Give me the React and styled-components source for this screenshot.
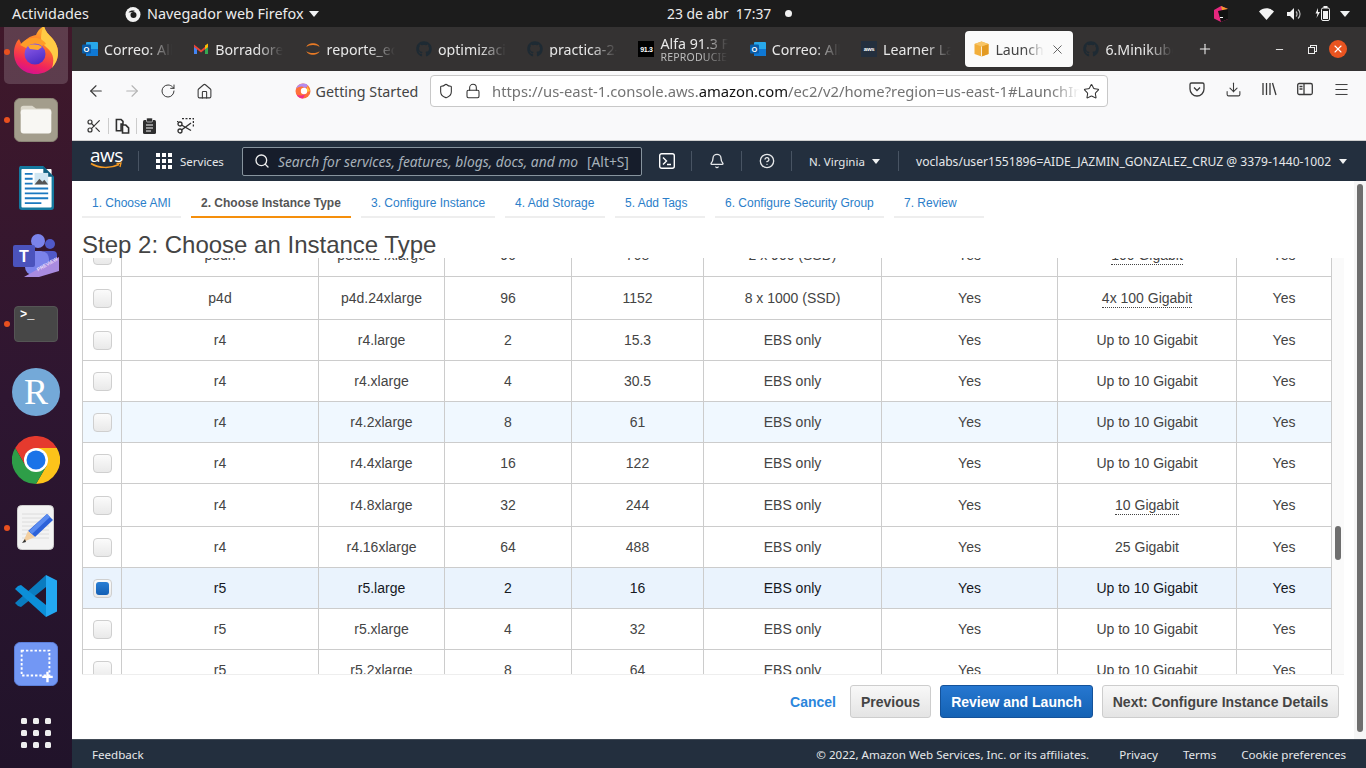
import React from 'react';
import styled, { createGlobalStyle } from 'styled-components';
import { ArrowLeft, ArrowRight, RotateCw, House, Shield, Lock, Star, Download, Menu, Scissors, Search, Bell, CircleHelp, X, Plus, Minus } from 'lucide-react';
import { FaGithub } from 'react-icons/fa';

const Global = createGlobalStyle`
  html, body { margin: 0; padding: 0; width: 1366px; height: 768px; overflow: hidden; background: #fff; }
  * { box-sizing: border-box; }
`;
const UI = `"Noto Sans", "Open Sans", sans-serif`;
const AWS = `"Liberation Sans", Arial, sans-serif`;

const Screen = styled.div`width: 1366px; height: 768px; display: flex; flex-direction: column; overflow: hidden; font-family: ${UI};`;
const TopBar = styled.header`height: 27px; flex: none; background: #1c1c1c; color: #ececec; font-size: 14.4px; display: flex; align-items: center; position: relative; z-index: 3;`;
const Activities = styled.span`margin-left: 12px; width: 113px;`;
const AppMenu = styled.div`display: flex; align-items: center; gap: 6px; width: 542px; svg { flex: none; }`;
const Clock = styled.div`display: flex; align-items: center; font-size: 13.9px; width: 130px; span:first-child { width: 117.5px; white-space: nowrap; }`;
const StatusDot = styled.i`display: block; width: 7px; height: 7px; border-radius: 50%; background: #f2f2f2;`;
const Tray = styled.div`margin-left: auto; display: flex; align-items: center; margin-right: 16px; gap: 13px;`;
const TraySpacer = styled.span`width: 4px;`;
const Workspace = styled.div`flex: 1; display: flex; min-height: 0;`;

const Dock = styled.nav`width: 72px; flex: none; background: linear-gradient(180deg, #40182a 0%, #2e1631 50%, #21132a 100%); overflow: hidden; display: flex; flex-direction: column; align-items: center;`;
const DockItem = styled.div`width: 72px; height: 68px; flex: none; position: relative; display: flex; align-items: center; justify-content: center; &:first-child { margin-top: -9px; }`;
const ActiveTile = styled.div`position: absolute; left: 4px; top: 2px; width: 64px; height: 64px; border-radius: 5px; background: rgba(255,255,255,.16);`;
const RunDot = styled.i`position: absolute; left: 4px; top: 31px; width: 6px; height: 6px; border-radius: 50%; background: #e9501f;`;
const DockIcon = styled.div`position: relative; width: 48px; height: 48px; display: flex; align-items: center; justify-content: center;`;
const RBall = styled.div`width: 48px; height: 48px; border-radius: 50%; background: #74a9d8; color: #fff; font: 400 36px "Liberation Serif", serif; display: flex; align-items: center; justify-content: center;`;
const TermTile = styled.div`width: 44px; height: 36px; border-radius: 4px; background: #474747; border: 1px solid #555; color: #fff; font: 700 12px "Liberation Mono", monospace; padding: 1px 0 0 5px; line-height: 14px;`;
const AppsGrid = styled.div`display: grid; grid-template-columns: repeat(3, 6px); gap: 6px; margin-top: 1px; i { width: 6px; height: 6px; border-radius: 1.5px; background: #eeeeee; display: block; }`;

const Browser = styled.main`flex: 1; min-width: 0; display: flex; flex-direction: column;`;
const TabBar = styled.div`height: 44px; flex: none; background: #343232; display: flex; align-items: center; color: #e8e8e8; font-size: 14.2px;`;
const Tab = styled.div`width: 111.3px; flex: none; height: 36px; padding-left: ${p => p.$active ? 9 : 10}px; display: flex; align-items: center; gap: 6px; position: relative; overflow: hidden; svg { flex: none; }
  ${p => p.$active ? `background: #fafafa; color: #444; border-radius: 4px; margin-left: 3px; width: 108px; box-shadow: 0 0 1px rgba(0,0,0,.4);` : ''}`;
const TabLabel = styled.div`width: ${p => p.$w || 68}px; white-space: nowrap; overflow: hidden; -webkit-mask-image: linear-gradient(90deg, #000 62%, transparent 100%); mask-image: linear-gradient(90deg, #000 62%, transparent 100%); line-height: 15px;`;
const TabSub = styled.div`font-size: 10.5px; color: #bdbdbd; line-height: 12px; letter-spacing: .2px;`;
const TabClose = styled.span`margin-left: auto; margin-right: 8px; display: flex; color: #444;`;
const NewTab = styled.span`margin-left: 12px; display: flex; color: #f0f0f0; width: 60px;`;
const WinControls = styled.div`margin-left: auto; display: flex; align-items: center; margin-right: 19px; color: #eee;`;
const MinimizeBtn = styled.span`display: flex; margin-right: 23px;`;
const RestoreBox = styled.i`display: block; width: 7px; height: 7px; margin: 2px 14px 0 0; border: 1px solid #eee; box-shadow: 2px -2px 0 -1px #343232, 2px -2px 0 0 #eee;`;
const CloseCircle = styled.span`width: 18px; height: 18px; border-radius: 50%; background: #e95420; display: flex; align-items: center; justify-content: center; color: #fff;`;
const Fav = styled.div`width: 16px; height: 16px; flex: none; background: #000; color: #fff; font: 700 7px ${AWS}; display: flex; align-items: center; justify-content: center; letter-spacing: -.3px;`;
const AwsFav = styled(Fav)`background: #232f3e; font-size: 6px;`;

const NavBar = styled.div`height: 36px; flex: none; background: #f9f9fa; display: flex; align-items: flex-start; color: #3a3a3a;`;
const NavBtn = styled.span`width: ${p => p.$w || 36}px; height: 32px; margin-top: 4px; display: flex; align-items: center; justify-content: center; color: ${p => p.$dim ? '#b4b4b4' : '#3a3a3a'}; flex: none;`;
const NavLeft = styled.div`display: flex; padding-left: 6px; width: 223px; flex: none;`;
const Bookmark = styled.div`display: flex; align-items: center; gap: 4.5px; width: 135px; margin-top: 4px; height: 32px; flex: none; font-size: 14.3px; color: #444; white-space: nowrap;`;
const UrlBox = styled.div`width: 678px; height: 32px; margin-top: 4px; flex: none; background: #fff; border: 1px solid #c8c8c8; border-radius: 4px; display: flex; align-items: center; padding-left: 7px; color: #333;`;
const UrlText = styled.div`width: 588px; margin-left: 11px; flex: none; white-space: nowrap; overflow: hidden; font-size: 14.8px; color: #737373; -webkit-mask-image: linear-gradient(90deg, #000 95%, transparent 100%); mask-image: linear-gradient(90deg, #000 95%, transparent 100%); b { font-weight: 400; color: #111; }`;
const UrlIcon = styled.span`display: flex; margin-left: ${p => p.$ml || 0}px;`;
const NavRight = styled.div`margin-left: 81px; display: flex; gap: 19.7px; align-items: center; height: 36px; color: #3a3a3a; svg { display: block; }`;

const ToolStrip = styled.div`height: 34px; flex: none; background: #f9f9fa; border-bottom: 1px solid #cfcfcf; display: flex; align-items: center; padding: 4px 0 0 14px; color: #333;`;
const StripSep = styled.i`display: block; width: 1px; height: 16px; background: #ccc; margin: 0 6px;`;
const StripGap = styled.span`width: 21px;`;

const AwsNav = styled.div`height: 40px; flex: none; background: #232f3e; display: flex; align-items: center; padding-left: 18px; color: #e6e8ea; font-size: 11.5px; white-space: nowrap;`;
const AwsLogo = styled.div`width: 32px; flex: none; position: relative; color: #fff; font: 500 19px/16px "Open Sans", sans-serif; letter-spacing: -.5px; height: 26px; margin-top: -3px; svg { display: block; margin-top: -1px; }`;
const NavDiv = styled.i`display: block; width: 1px; height: 20px; background: #485463; flex: none; margin: 0 ${p => p.$r ?? 17}px 0 ${p => p.$l ?? 16}px;`;
const ServicesGrid = styled.div`display: grid; grid-template-columns: repeat(3, 4px); gap: 2px; flex: none; i { width: 4px; height: 4px; background: #fff; display: block; }`;
const ServicesLabel = styled.span`margin-left: 8px; width: 45px; flex: none;`;
const SearchBox = styled.div`width: 400px; height: 29px; flex: none; margin: 0 17px; background: #161d2b; border: 1px solid #87949e; border-radius: 2px; display: flex; align-items: center; padding-left: 11px; color: #a7b1ba; font-size: 13.8px; svg { color: #eee; flex: none; }`;
const SearchPlaceholder = styled.span`font-style: italic; width: 300px; margin-left: 8px; flex: none;`;
const SearchKey = styled.span`margin-left: 9px; flex: none;`;
const Caret = styled.i`display: block; width: 0; height: 0; flex: none; border-left: ${p => p.$s || 4}px solid transparent; border-right: ${p => p.$s || 4}px solid transparent; border-top: ${p => (p.$s || 4) + 1}px solid ${p => p.$c || '#f0f2f3'}; margin-left: ${p => p.$ml ?? 6}px;`;
const Region = styled.span`width: 57px; flex: none;`;
const Account = styled.span`width: 417px; flex: none; font-size: 12.1px;`;

const Content = styled.section`flex: 1; min-height: 0; display: flex; background: #fff;`;
const Page = styled.div`width: 1282px; flex: none; padding-left: 10px; display: flex; flex-direction: column; font-family: ${AWS};`;
const Wizard = styled.div`display: flex; gap: 10px; margin-top: 8px; height: 29px; flex: none;`;
const Step = styled.div`height: 29px; width: ${p => p.$w}px; padding: 7px 0 0 10px; font-size: 12px; line-height: 14px; white-space: nowrap; border-bottom: 2px solid ${p => p.$active ? '#f58f0c' : '#eeeeee'}; color: ${p => p.$active ? '#555' : '#2b7ec9'}; font-weight: ${p => p.$active ? 700 : 400};`;
const Title = styled.h1`margin: 0; height: 40px; padding-top: 13px; font: 400 24px/28px ${AWS}; color: #444; flex: none; position: relative; z-index: 1;`;
const TableArea = styled.div`height: 417px; flex: none; display: flex; border-bottom: 1px solid #eeeeee; width: 1262px;`;
const TableClip = styled.div`width: 1250px; flex: none; overflow: hidden;`;
const Table = styled.table`border-collapse: separate; border-spacing: 0; table-layout: fixed; width: 1250px; margin-top: -24px; border-left: 1px solid #cccccc; font-size: 14px; color: #444;`;
const Row = styled.tr`background: ${p => p.$selected ? '#eaf3fd' : p.$hover ? '#f0f8ff' : '#fff'}; color: ${p => p.$selected ? '#16191f' : '#444'};`;
const Cell = styled.td`height: ${p => p.$h}px; padding: 0; text-align: center; border-right: 1px solid #cccccc; border-bottom: 1px solid #cccccc;`;
const Dotted = styled.span`border-bottom: 1px dotted #444; padding-bottom: 1px;`;
const Check = styled.span`width: 19px; height: 19px; margin: 0 auto; border: 1px solid #cfcfcf; border-radius: 4px; background: linear-gradient(180deg, #fbfbfb, #e9e9e9); display: flex; align-items: center; justify-content: center;
  ${p => p.$on ? `&::after { content: ""; width: 13px; height: 13px; border-radius: 3px; background: linear-gradient(180deg, #2a7fd4, #135fb5); }` : ''}`;
const InnerTrack = styled.div`width: 12px; flex: none; background: #fafafa; padding: 268px 3px 0;`;
const InnerThumb = styled.div`width: 6px; height: 34px; border-radius: 3px; background: #6e6e6e;`;
const Actions = styled.div`display: flex; justify-content: flex-end; align-items: center; gap: 9px; padding: 10px 15px 0 0;`;
const CancelLink = styled.span`color: #2b86dc; font-weight: 700; font-size: 14px; margin-right: 5px;`;
const Button = styled.span`height: 33px; width: ${p => p.$w}px; display: flex; align-items: center; justify-content: center; border-radius: 3px; font-weight: 700; font-size: 14px; white-space: nowrap;
  ${p => p.$primary ? `background: linear-gradient(180deg, #2677d0, #1462b4); border: 1px solid #14529a; color: #fff;` : `background: linear-gradient(180deg, #f8f8f8, #e4e4e4); border: 1px solid #cdcdcd; color: #444;`}`;
const OuterTrack = styled.div`width: 12px; flex: none; background: #f6f6f6; padding: 3px 3px 0;`;
const OuterThumb = styled.div`width: 6px; height: 548px; border-radius: 3px; background: #6e6e6e;`;
const Footer = styled.footer`height: 29px; flex: none; background: #232f3e; border-top: 1px solid #414a55; display: flex; align-items: center; padding: 0 20px; color: #e6e8ea; font-size: 11.6px; white-space: nowrap;`;
const FootLinks = styled.div`margin-left: auto; display: flex; gap: 25px; span:first-child { margin-right: 5px; }`;

const Outlook = () => (
  <svg width="16" height="16" viewBox="0 0 16 16"><rect x="4" y="1" width="12" height="14" rx="1" fill="#28a8ea"/><path d="M4 8h12v6a1 1 0 0 1-1 1H5a1 1 0 0 1-1-1z" fill="#0f78d4"/><rect y="3.5" width="9" height="9" rx="1" fill="#0a5ca8"/><text x="4.5" y="10.7" fontSize="7.5" fontWeight="700" fill="#fff" textAnchor="middle" fontFamily="Liberation Sans">O</text></svg>
);
const Gmail = () => (
  <svg width="16" height="16" viewBox="0 0 16 16"><path d="M1 4v9h3V7z" fill="#4285f4"/><path d="M15 4v9h-3V7z" fill="#34a853"/><path d="M1 3.5 8 9l7-5.5V6L8 11.500 1 6z" fill="#ea4335"/><path d="M12 4.500 15 2.500V6l-3 2.200z" fill="#fbbc04"/></svg>
);
const Jupyter = () => (
  <svg width="16" height="16" viewBox="0 0 16 16" fill="#e87a25"><path d="M1.500 6C2.500 1 13.500 1 14.500 6 12.500 3.200 3.500 3.200 1.500 6z"/><path d="M1.500 10C2.500 15 13.500 15 14.500 10 12.500 12.800 3.500 12.800 1.500 10z"/></svg>
);
const Cube = () => (
  <svg width="15" height="16" viewBox="0 0 15 16"><path d="M7.500 0.500 14.500 3v10l-7 2.500L.5 13V3z" fill="#f2ae3a"/><path d="M7.500 5.500 14.500 3v10l-7 2.500z" fill="#e39a22"/><path d="M7.500.5 14.500 3l-7 2.500L.5 3z" fill="#f8c566"/><path d="M7.500 5.500v10" stroke="#fff" strokeWidth=".8"/></svg>
);
const GitHubFav = () => <FaGithub size={16} color="#1e2a33" />;

const FirefoxLogo = () => (
  <svg width="48" height="52" viewBox="0 0 48 52">
    <defs>
      <linearGradient id="ffa" x1=".7" y1="0" x2=".4" y2="1"><stop offset="0" stopColor="#ffbd2e"/><stop offset=".45" stopColor="#ff6a2a"/><stop offset=".8" stopColor="#f0245c"/><stop offset="1" stopColor="#d6128f"/></linearGradient>
      <linearGradient id="ffb" x1=".3" y1="0" x2=".7" y2="1"><stop offset="0" stopColor="#8c5ae8"/><stop offset="1" stopColor="#4a2bc2"/></linearGradient>
    </defs>
    <path d="M24 48C11 48 2 39 2 27c0-6 2-11 5-14l3 6c3-6 8-9 14-10 1-3 4-7 8-9 1 5 4 8 8 12 4 5 6 9 6 15 0 12-10 21-22 21z" fill="url(#ffa)" />
    <path d="M32 0c1 5 4 8 8 12 4 5 6 9 6 15 0 7-3 11-6 15 2-6 2-12-2-17-3-4-8-6-9-12 0-5 1-10 3-13z" fill="#ffcb45"/>
    <path d="M8 19c4-5 10-8 17-7 5 1 8 4 9 6l-7 3-8-2-5 3z" fill="#ff9d28"/>
    <circle cx="23" cy="28" r="10.500" fill="url(#ffb)"/>
    <path d="M16 20c4-2 10-2 14 1l-4 3-8-1z" fill="#ffa92e"/>
  </svg>
);
const FilesIcon = () => (
  <svg width="44" height="44" viewBox="0 0 46 46"><rect x=".5" y=".5" width="45" height="45" rx="6" fill="#a39d8c" stroke="#8d8878"/><path d="M7 11a3 3 0 0 1 3-3h9l4 3h13a3 3 0 0 1 3 3v3H7z" fill="#dcd8cc"/><rect x="7" y="12" width="32" height="25" rx="3" fill="#f8f7f3"/></svg>
);
const WriterIcon = () => (
  <svg width="37" height="45" viewBox="0 0 38 46"><path d="M2 0h24l11 11v31a3 3 0 0 1-3 3H4a3 3 0 0 1-3-3V2z" fill="#15799f"/><rect x="3.500" y="3" width="31" height="39.500" rx="1" fill="#fff"/><path d="M26 0v11h11z" fill="#0f5f80"/><path d="M7 7h8v2H7zM7 12h8v2H7zM7 17h8v2H7zM7 22h24v2H7zM7 27h24v2H7zM7 32h24v2H7zM7 37h17v2H7z" fill="#1b79c0"/><rect x="17" y="7" width="14" height="12" fill="#cfe6f2"/><path d="M17 19l5-6 3 3 2-2 4 5z" fill="#555"/></svg>
);
const TeamsIcon = () => (
  <svg width="48" height="46" viewBox="0 0 48 46"><circle cx="26" cy="8" r="7" fill="#7b83eb"/><circle cx="38" cy="11" r="5" fill="#5059c9"/><rect x="30" y="18" width="15" height="16" rx="4" fill="#5059c9"/><rect x="13" y="18" width="24" height="24" rx="8" fill="#7b83eb"/><rect x="1" y="12" width="22" height="22" rx="2" fill="#4b53bc"/><text x="12" y="29" fontSize="16" fontWeight="700" fill="#fff" textAnchor="middle" fontFamily="Liberation Sans">T</text><path d="M12 44 47 24v14l-20 6z" fill="#a98be0"/><text x="0" y="0" fontSize="5" fontWeight="700" fill="#e9defa" fontFamily="Liberation Sans" transform="translate(26 38.500) rotate(-30)">PREVIEW</text></svg>
);
const ChromeIcon = () => (
  <svg width="48" height="48" viewBox="0 0 48 48"><path d="M3.200 12A24 24 0 0 1 44.800 12H24L13.600 30z" fill="#e53a2e"/><path d="M44.800 12A24 24 0 0 1 24 48L34.400 30 24 12z" fill="#fcc31a"/><path d="M24 48A24 24 0 0 1 3.200 12L13.600 30H34.400z" fill="#2e9e48"/><circle cx="24" cy="24" r="12" fill="#fff"/><circle cx="24" cy="24" r="9.500" fill="#1a73e8"/></svg>
);
const EditorIcon = () => (
  <svg width="38" height="46" viewBox="0 0 38 46"><rect x=".5" y=".5" width="36" height="44" rx="4" fill="#f3f3f3" stroke="#cfcfcf"/><path d="M5 9h27M5 13h27M5 17h27M5 21h27M5 25h27M5 29h27M5 33h27" stroke="#dcdcdc"/><path d="M30 9l6 6-18 17-7-6z" fill="#2d62d9"/><path d="M30 9l3 3-18 17-3-3z" fill="#5b8cf0"/><path d="M11 26l7 6-12 5z" fill="#f3cfa0"/><path d="M8 34l-3 4 4-1z" fill="#333"/></svg>
);
const VsCodeIcon = () => (
  <svg width="44" height="44" viewBox="0 0 44 44"><path d="M32 1 1 29l3 3 3 1 25-20z" fill="#0a7cc0"/><path d="M1 15l3-3 3-1 25 20v12z" fill="#0c8fd8"/><path d="M32 1l11 5.500v31L32 43z" fill="#23a8f2"/></svg>
);
const ShotIcon = () => (
  <svg width="44" height="44" viewBox="0 0 46 46"><rect x=".5" y=".5" width="45" height="45" rx="6" fill="#7297f4" stroke="#5e82e0"/><rect x="8" y="9" width="29" height="26" fill="none" stroke="#fff" strokeWidth="2" strokeDasharray="2.500 2"/><path d="M35 31v11M29.500 36.500h11" stroke="#fff" strokeWidth="2.500"/></svg>
);
const FoxMini = () => (
  <svg width="16" height="16" viewBox="0 0 16 16"><circle cx="8" cy="8.500" r="7.500" fill="#f2f2f2"/><circle cx="8.500" cy="9" r="3" fill="#1c1c1c"/><path d="M5 0c0 3 1 3.500 3 4l-3 2z" fill="#f2f2f2"/><path d="M3.500 6.500C5 4.500 8 4 10 5L8 6z" fill="#1c1c1c"/></svg>
);
const JetIcon = () => (
  <svg width="15" height="16" viewBox="0 0 15 16"><path d="M7 0l7 3v10l-7 3-7-3.500V4z" fill="#e6277e"/><path d="M7 0l7 3-5 5z" fill="#f39b2d"/><path d="M4 5l10-2v10l-7 3z" fill="#111"/><path d="M6 11.500h3" stroke="#fff"/></svg>
);
const Wifi = () => <svg width="15" height="12" viewBox="0 0 15 12"><path d="M0 3.500C4-.7 11-.7 15 3.500L7.500 12z" fill="#f2f2f2"/></svg>;
const Volume = () => <svg width="15" height="12" viewBox="0 0 15 12"><path d="M0 4h3l4-4v12L3 8H0z" fill="#f2f2f2"/><path d="M9 3.500a3.500 3.500 0 0 1 0 5M11 1.500a6 6 0 0 1 0 9" stroke="#bbb" strokeWidth="1.200" fill="none"/></svg>;
const Battery = () => <svg width="15" height="15" viewBox="0 0 15 15"><path d="M3 2 .5 7.500h2L1.500 12 5 6H3z" fill="#f2f2f2"/><rect x="6.500" y="2" width="8" height="12.500" rx="1.500" fill="none" stroke="#f2f2f2"/><rect x="8.500" y="0" width="4" height="2" fill="#f2f2f2"/><rect x="8" y="5" width="5" height="8" fill="#f2f2f2"/></svg>;
const Pocket = () => <svg width="16" height="16" viewBox="0 0 16 16" fill="none" stroke="currentColor" strokeWidth="1.300"><path d="M2.500 2h11A1.500 1.500 0 0 1 15 3.500V8A7 7 0 0 1 1 8V3.500A1.500 1.500 0 0 1 2.500 2z"/><path d="M5 6.500 8 9.500l3-3"/></svg>;
const LibraryI = () => <svg width="16" height="16" viewBox="0 0 16 16" fill="none" stroke="currentColor" strokeWidth="1.300"><path d="M2 2v12M5.500 2v12M9 2v12M11.500 2l3.500 12"/></svg>;
const SidebarI = () => <svg width="16" height="16" viewBox="0 0 16 16" fill="none" stroke="currentColor" strokeWidth="1.300"><rect x=".7" y="2.500" width="14.600" height="11" rx="1.500"/><path d="M7 2.500v11M2.500 5.500h3M2.500 8h3"/></svg>;
const GettingStarted = () => <svg width="16" height="16" viewBox="0 0 16 16"><circle cx="8" cy="8" r="7.500" fill="#ff7139"/><path d="M8 .5A7.500 7.500 0 0 0 1 6c2-3 7-3.500 9-1 3-1 3-3 1.500-4z" fill="#b48bf0"/><path d="M8 15.500A7.500 7.500 0 0 1 1.500 11.500c3 2 7 1 9-1z" fill="#f0308a"/><circle cx="9" cy="8" r="3.200" fill="#fff"/><path d="M12 3l3 5-3 1z" fill="#ffc13b"/></svg>;
const PasteDoc = () => <svg width="15" height="16" viewBox="0 0 16 17" fill="none" stroke="#2f2f2f" strokeWidth="1.700"><path d="M1.500 1.500h5l2 2v3H6.500v7h-5z"/><path d="M8 7.500h3.500l3 3v5.500H8z" fill="#f9f9fa"/></svg>;
const ClipI = () => <svg width="13" height="16" viewBox="0 0 13 16"><rect y="2" width="13" height="14" rx="1.500" fill="#2f2f2f"/><rect x="3.500" y="0" width="6" height="4" rx="1" fill="#2f2f2f" stroke="#f9f9fa" strokeWidth=".6"/><path d="M3 7h7M3 10h7M3 13h5" stroke="#f9f9fa"/></svg>;
const ScissorShot = () => <svg width="17" height="16" viewBox="0 0 17 16" fill="none" stroke="#2f2f2f"><path d="M5 .5h11.500V10" strokeDasharray="2 1.500" strokeWidth="1.500"/><path d="M.5 3v1" strokeWidth="1.500"/><circle cx="3" cy="13" r="2" strokeWidth="1.300"/><circle cx="3" cy="6" r="2" strokeWidth="1.300"/><path d="M4.500 7 14 12.500M4.500 12 14 5" strokeWidth="1.400"/></svg>;
const TerminalI = () => <svg width="16" height="16" viewBox="0 0 16 16" fill="none" stroke="#fff" strokeWidth="1.400"><rect x=".7" y=".7" width="14.600" height="14.600" rx="2"/><path d="M4 4.500 7.500 8 4 11.500M8 11.500h4"/></svg>;

const rows = [
  ['p3dn', 'p3dn.24xlarge', '96', '768', '2 x 900 (SSD)', '100 Gigabit', 43, true],
  ['p4d', 'p4d.24xlarge', '96', '1152', '8 x 1000 (SSD)', '4x 100 Gigabit', 43, true],
  ['r4', 'r4.large', '2', '15.3', 'EBS only', 'Up to 10 Gigabit', 41],
  ['r4', 'r4.xlarge', '4', '30.5', 'EBS only', 'Up to 10 Gigabit', 41],
  ['r4', 'r4.2xlarge', '8', '61', 'EBS only', 'Up to 10 Gigabit', 41, false, 'hover'],
  ['r4', 'r4.4xlarge', '16', '122', 'EBS only', 'Up to 10 Gigabit', 41],
  ['r4', 'r4.8xlarge', '32', '244', 'EBS only', '10 Gigabit', 43, true],
  ['r4', 'r4.16xlarge', '64', '488', 'EBS only', '25 Gigabit', 41],
  ['r5', 'r5.large', '2', '16', 'EBS only', 'Up to 10 Gigabit', 41, false, 'selected'],
  ['r5', 'r5.xlarge', '4', '32', 'EBS only', 'Up to 10 Gigabit', 41],
  ['r5', 'r5.2xlarge', '8', '64', 'EBS only', 'Up to 10 Gigabit', 41],
];
const cols = [39, 197, 126, 127, 132, 178, 176, 179, 95];
const steps = [['1. Choose AMI', 99], ['2. Choose Instance Type', 160], ['3. Configure Instance', 134], ['4. Add Storage', 100], ['5. Add Tags', 90], ['6. Configure Security Group', 169], ['7. Review', 90]];
const dock = [
  [<FirefoxLogo />, true, true], [<FilesIcon />, true], [<WriterIcon />], [<TeamsIcon />], [<TermTile>{'>_'}</TermTile>, true],
  [<RBall>R</RBall>], [<ChromeIcon />], [<EditorIcon />, true], [<VsCodeIcon />], [<ShotIcon />],
];
const tabs = [
  [<Outlook />, 'Correo: All'], [<Gmail />, 'Borradores'], [<Jupyter />, 'reporte_ec2'], [<GitHubFav />, 'optimización'], [<GitHubFav />, 'practica-2-k'],
  [<Fav>91.3</Fav>, 'Alfa 91.3 FM', 'REPRODUCIENDO'], [<Outlook />, 'Correo: All'], [<AwsFav>aws</AwsFav>, 'Learner Lab'],
];

export default function App() {
  return (
    <Screen>
      <Global />
      <TopBar>
        <Activities>Actividades</Activities>
        <AppMenu><FoxMini />Navegador web Firefox<Caret $s={5} $ml={-1} /></AppMenu>
        <Clock><span>23 de abr&nbsp; 17:37</span><StatusDot /></Clock>
        <Tray><JetIcon /><TraySpacer /><Wifi /><Volume /><Battery /><Caret $s={5} $ml={-3} /></Tray>
      </TopBar>
      <Workspace>
        <Dock>
          {dock.map(([icon, running, active], i) => (
            <DockItem key={i}>
              {active && <ActiveTile />}
              {running && <RunDot />}
              <DockIcon>{icon}</DockIcon>
            </DockItem>
          ))}
          <DockItem><AppsGrid>{Array.from({ length: 9 }, (_, i) => <i key={i} />)}</AppsGrid></DockItem>
        </Dock>
        <Browser>
          <TabBar>
            {tabs.map(([icon, label, sub], i) => (
              <Tab key={i}>
                {icon}
                <TabLabel>{label}{sub && <TabSub>{sub}</TabSub>}</TabLabel>
              </Tab>
            ))}
            <Tab $active><Cube /><TabLabel $w={56}>Launch instance</TabLabel><TabClose><X size={15} strokeWidth={1.3} /></TabClose></Tab>
            <Tab><GitHubFav /><TabLabel>6.Minikube</TabLabel></Tab>
            <NewTab><Plus size={16} strokeWidth={1.6} /></NewTab>
            <WinControls><MinimizeBtn><Minus size={11} /></MinimizeBtn><RestoreBox /><CloseCircle><X size={12} strokeWidth={2.2} /></CloseCircle></WinControls>
          </TabBar>
          <NavBar>
            <NavLeft>
              <NavBtn><ArrowLeft size={18} strokeWidth={1.5} /></NavBtn>
              <NavBtn $dim><ArrowRight size={18} strokeWidth={1.5} /></NavBtn>
              <NavBtn><RotateCw size={16} strokeWidth={1.5} /></NavBtn>
              <NavBtn><House size={17} strokeWidth={1.5} /></NavBtn>
            </NavLeft>
            <Bookmark><GettingStarted />Getting Started</Bookmark>
            <UrlBox>
              <UrlIcon><Shield size={16} strokeWidth={1.6} /></UrlIcon>
              <UrlIcon $ml={11}><Lock size={16} strokeWidth={1.6} /></UrlIcon>
              <UrlText>https://us-east-1.console.aws.<b>amazon.com</b>/ec2/v2/home?region=us-east-1#LaunchInstanceWizard:</UrlText>
              <UrlIcon $ml={3}><Star size={17} strokeWidth={1.5} /></UrlIcon>
            </UrlBox>
            <NavRight>
              <Pocket /><Download size={17} strokeWidth={1.5} /><LibraryI /><SidebarI /><Menu size={17} strokeWidth={1.4} />
            </NavRight>
          </NavBar>
          <ToolStrip>
            <Scissors size={16} strokeWidth={1.8} />
            <StripSep />
            <PasteDoc />
            <StripSep />
            <ClipI />
            <StripGap />
            <ScissorShot />
          </ToolStrip>
          <AwsNav>
            <AwsLogo>aws<svg width="32" height="8" viewBox="0 0 32 8" fill="none"><path d="M1 1.500C9 6.500 21 6.500 29 2.500" stroke="#f59a23" strokeWidth="1.500"/><path d="M26.500 1.500 31 1l-1 4" stroke="#f59a23" strokeWidth="1.300"/></svg></AwsLogo>
            <NavDiv />
            <ServicesGrid>{Array.from({ length: 9 }, (_, i) => <i key={i} />)}</ServicesGrid>
            <ServicesLabel>Services</ServicesLabel>
            <SearchBox>
              <Search size={16} strokeWidth={2} />
              <SearchPlaceholder>Search for services, features, blogs, docs, and mo</SearchPlaceholder>
              <SearchKey>[Alt+S]</SearchKey>
            </SearchBox>
            <TerminalI />
            <NavDiv />
            <Bell size={16} strokeWidth={2} />
            <NavDiv />
            <CircleHelp size={16} strokeWidth={2} />
            <NavDiv />
            <Region>N. Virginia</Region><Caret />
            <NavDiv $l={18} />
            <Account>voclabs/user1551896=AIDE_JAZMIN_GONZALEZ_CRUZ @ 3379-1440-1002</Account><Caret />
          </AwsNav>
          <Content>
            <Page>
              <Wizard>
                {steps.map(([s, w], i) => <Step key={s} $w={w} $active={i === 1}>{s}</Step>)}
              </Wizard>
              <Title>Step 2: Choose an Instance Type</Title>
              <TableArea>
                <TableClip>
                  <Table>
                    <colgroup>{cols.map((w, i) => <col key={i} style={{ width: w }} />)}</colgroup>
                    <tbody>
                      {rows.map(([fam, type, cpu, mem, store, net, h, dotted, state]) => (
                        <Row key={type} $selected={state === 'selected'} $hover={state === 'hover'}>
                          <Cell $h={h}><Check $on={state === 'selected'} /></Cell>
                          <Cell $h={h}>{fam}</Cell>
                          <Cell $h={h}>{type}</Cell>
                          <Cell $h={h}>{cpu}</Cell>
                          <Cell $h={h}>{mem}</Cell>
                          <Cell $h={h}>{store}</Cell>
                          <Cell $h={h}>Yes</Cell>
                          <Cell $h={h}>{dotted ? <Dotted>{net}</Dotted> : net}</Cell>
                          <Cell $h={h}>Yes</Cell>
                        </Row>
                      ))}
                    </tbody>
                  </Table>
                </TableClip>
                <InnerTrack><InnerThumb /></InnerTrack>
              </TableArea>
              <Actions>
                <CancelLink>Cancel</CancelLink>
                <Button $w={81}>Previous</Button>
                <Button $w={153} $primary>Review and Launch</Button>
                <Button $w={237}>Next: Configure Instance Details</Button>
              </Actions>
            </Page>
            <OuterTrack><OuterThumb /></OuterTrack>
          </Content>
          <Footer>
            Feedback
            <FootLinks>
              <span>© 2022, Amazon Web Services, Inc. or its affiliates.</span>
              <span>Privacy</span><span>Terms</span><span>Cookie preferences</span>
            </FootLinks>
          </Footer>
        </Browser>
      </Workspace>
    </Screen>
  );
}
